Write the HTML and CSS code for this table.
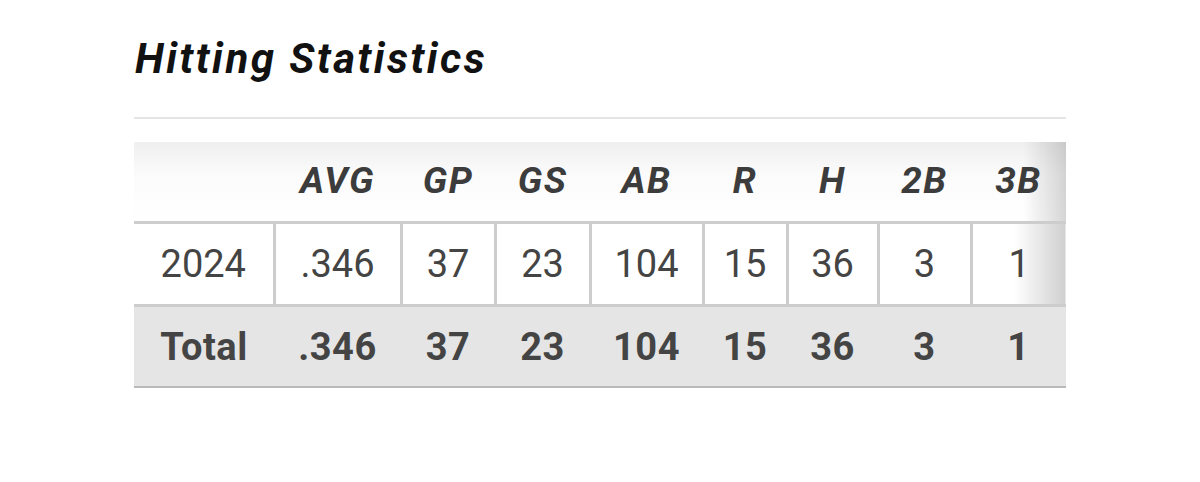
FILE: index.html
```html
<!DOCTYPE html>
<html>
<head>
<meta charset="utf-8">
<link rel="stylesheet" href="styles.css">
</head>
<body>
<div class="wrap">
  <h2 class="title">Hitting Statistics</h2>
  <div class="rule"></div>
  <table class="stats">
    <colgroup>
      <col class="c0"><col class="c1"><col class="c2"><col class="c3"><col class="c4"><col class="c5"><col class="c6"><col class="c7"><col class="c8">
    </colgroup>
    <thead>
      <tr class="head">
        <th></th><th>AVG</th><th>GP</th><th>GS</th><th>AB</th><th>R</th><th>H</th><th>2B</th><th class="last">3B</th>
      </tr>
    </thead>
    <tbody>
      <tr class="row">
        <td class="first">2024</td><td>.346</td><td>37</td><td>23</td><td>104</td><td>15</td><td>36</td><td>3</td><td class="last">1</td>
      </tr>
      <tr class="total">
        <td>Total</td><td>.346</td><td>37</td><td>23</td><td>104</td><td>15</td><td>36</td><td>3</td><td>1</td>
      </tr>
    </tbody>
  </table>
</div>
</body>
</html>
```

FILE: styles.css
```css
html, body {
  margin: 0;
  padding: 0;
  background: #fff;
}
.wrap {
  padding: 35px 0 0 134px;
  width: 932px;
  font-family: Roboto, "Liberation Sans", sans-serif;
}
.title {
  margin: 0 0 0 1px;
  font-size: 42px;
  line-height: 48px;
  font-weight: 700;
  font-style: italic;
  color: #111;
  letter-spacing: 2.5px;
}
.rule {
  margin-top: 34px;
  height: 2px;
  background: #e4e4e4;
}
.stats {
  margin-top: 23px;
  width: 932px;
  border-collapse: collapse;
  table-layout: fixed;
  color: #444;
}
.c0 { width: 140px; }
.c1 { width: 127px; }
.c2 { width: 94px; }
.c3 { width: 95px; }
.c4 { width: 113px; }
.c5 { width: 84px; }
.c6 { width: 91px; }
.c7 { width: 93px; }
.c8 { width: 95px; }
.stats th, .stats td {
  padding: 0;
  text-align: center;
}
.head {
  height: 80px;
  background: linear-gradient(to bottom, #efefef 0%, #fbfbfb 40%, #fff 100%);
}
.head th {
  font-size: 37px;
  font-weight: 700;
  font-style: italic;
  color: #3c3c3c;
  vertical-align: middle;
  letter-spacing: 1.5px;
  padding-bottom: 2px;
}
.head th.last {
  background: linear-gradient(to right, rgba(255,255,255,0) 55%, rgba(0,0,0,0.16) 100%);
}
.row {
  height: 83px;
}
.row td {
  font-size: 38px;
  font-weight: 400;
  color: #444;
  background: #fff;
  border: 3px solid #cdcdcd;
}
.row td.first {
  border-left: none;
}
.row td.last {
  border-right: none;
  background: linear-gradient(to right, #fff 45%, #cfcfcf 100%);
}
.total {
  height: 82px;
  background: #e5e5e5;
  border-bottom: 2px solid #b9b9b9;
}
.total td {
  font-size: 38px;
  font-weight: 700;
  color: #444;
  padding-top: 2px;
  letter-spacing: 0.5px;
}
```
